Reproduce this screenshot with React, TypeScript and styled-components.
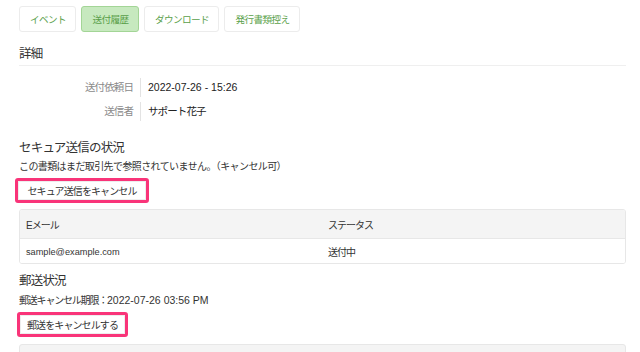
import React from "react";
import styled, { createGlobalStyle } from "styled-components";

const Global = createGlobalStyle`
  html, body { margin: 0; padding: 0; background: #fff; }
  body {
    font-family: "Liberation Sans", Arial, "Noto Sans CJK JP", sans-serif;
    color: #333;
    -webkit-font-smoothing: antialiased;
  }
`;

const Page = styled.div`
  width: 640px;
  height: 352px;
  overflow: hidden;
  padding: 6px 14px 0 19px;
  box-sizing: border-box;
`;

const Latin = styled.span<{ $size: number }>`
  font-size: ${(p) => p.$size}px;
  letter-spacing: 0;
`;

const Tabs = styled.div`
  display: flex;
  gap: 5px;
`;

const Tab = styled.div<{ $active?: boolean }>`
  height: 26px;
  box-sizing: border-box;
  padding: 0 9.5px 0 10px;
  display: flex;
  align-items: center;
  font-size: 9.6px;
  letter-spacing: -0.6px;
  color: #5a9f4a;
  border: 1px solid ${(p) => (p.$active ? "#a3d596" : "#ececec")};
  background: ${(p) => (p.$active ? "#c7e9bf" : "#fff")};
  border-radius: 3px;
`;

const Heading = styled.div<{ $top: number; $divider?: boolean }>`
  font-size: 12.5px;
  letter-spacing: -0.8px;
  color: #333;
  line-height: 18px;
  margin-top: ${(p) => p.$top}px;
  padding-bottom: ${(p) => (p.$divider ? "2px" : "0")};
  border-bottom: ${(p) => (p.$divider ? "1px solid #efefef" : "none")};
`;

const Details = styled.div`
  display: grid;
  grid-template-columns: 121px 1fr;
  row-gap: 5px;
  margin-top: 12px;
`;

const Label = styled.div`
  font-size: 10.5px;
  letter-spacing: -0.9px;
  color: #8a8a8a;
  text-align: right;
  padding-right: 7px;
  line-height: 19px;
`;

const Value = styled.div`
  font-size: 10.5px;
  letter-spacing: -0.9px;
  color: #222;
  border-left: 1px solid #e3e3e3;
  padding-left: 7px;
  line-height: 19px;
`;

const Note = styled.div<{ $ls: number }>`
  font-size: 10px;
  letter-spacing: ${(p) => p.$ls}px;
  color: #333;
  line-height: 14px;
  margin-top: 3px;
`;

const Highlight = styled.div<{ $left: number }>`
  display: inline-block;
  vertical-align: top;
  margin-left: ${(p) => p.$left}px;
  margin-top: 4px;
  border: 3px solid #f93479;
  border-radius: 3px;
`;

const Button = styled.div<{ $pad: number }>`
  height: 19px;
  box-sizing: border-box;
  padding: 0 ${(p) => p.$pad}px;
  display: flex;
  align-items: center;
  font-size: 10px;
  letter-spacing: -0.9px;
  color: #333;
  background: #fff;
  border: 1px solid #ededed;
`;

const ButtonLine = styled.div`
  display: flex;
`;

const Table = styled.div`
  margin-top: 6px;
  border: 1px solid #e7e7e7;
  border-radius: 3px;
  overflow: hidden;
`;

const Row = styled.div<{ $head?: boolean }>`
  display: grid;
  grid-template-columns: 302px 1fr;
  height: ${(p) => (p.$head ? "28px" : "24px")};
  align-items: center;
  background: ${(p) => (p.$head ? "#f4f4f4" : "#fff")};
  border-top: ${(p) => (p.$head ? "none" : "1px solid #e7e7e7")};
  font-size: 10px;
  letter-spacing: -1px;
  color: #333;
`;

const Cell = styled.div`
  padding-left: 6px;
`;

const EmptyTable = styled.div`
  margin-top: 7px;
  height: 30px;
  border: 1px solid #e7e7e7;
  border-radius: 3px;
  background: #f4f4f4;
`;

export default function App() {
  return (
    <>
      <Global />
      <Page>
        <Tabs>
          <Tab>イベント</Tab>
          <Tab $active>送付履歴</Tab>
          <Tab>ダウンロード</Tab>
          <Tab>発行書類控え</Tab>
        </Tabs>
        <Heading $top={13} $divider>
          詳細
        </Heading>
        <Details>
          <Label>送付依頼日</Label>
          <Value>
            <Latin $size={10.5}>2022-07-26 - 15:26</Latin>
          </Value>
          <Label>送信者</Label>
          <Value>サポート花子</Value>
        </Details>

        <Heading $top={18}>セキュア送信の状況</Heading>
        <Note $ls={-0.6}>この書類はまだ取引先で参照されていません。（キャンセル可）</Note>
        <ButtonLine>
          <Highlight $left={-4}>
            <Button $pad={8.5}>セキュア送信をキャンセル</Button>
          </Highlight>
        </ButtonLine>
        <Table>
          <Row $head>
            <Cell>Eメール</Cell>
            <Cell>ステータス</Cell>
          </Row>
          <Row>
            <Cell>
              <Latin $size={9.2}>sample@example.com</Latin>
            </Cell>
            <Cell>送付中</Cell>
          </Row>
        </Table>

        <Heading $top={8}>郵送状況</Heading>
        <Note $ls={-1.2}>
          郵送キャンセル期限：<Latin $size={10.5}>2022-07-26 03:56 PM</Latin>
        </Note>
        <ButtonLine>
          <Highlight $left={-2}>
            <Button $pad={6}>郵送をキャンセルする</Button>
          </Highlight>
        </ButtonLine>
        <EmptyTable />
      </Page>
    </>
  );
}
